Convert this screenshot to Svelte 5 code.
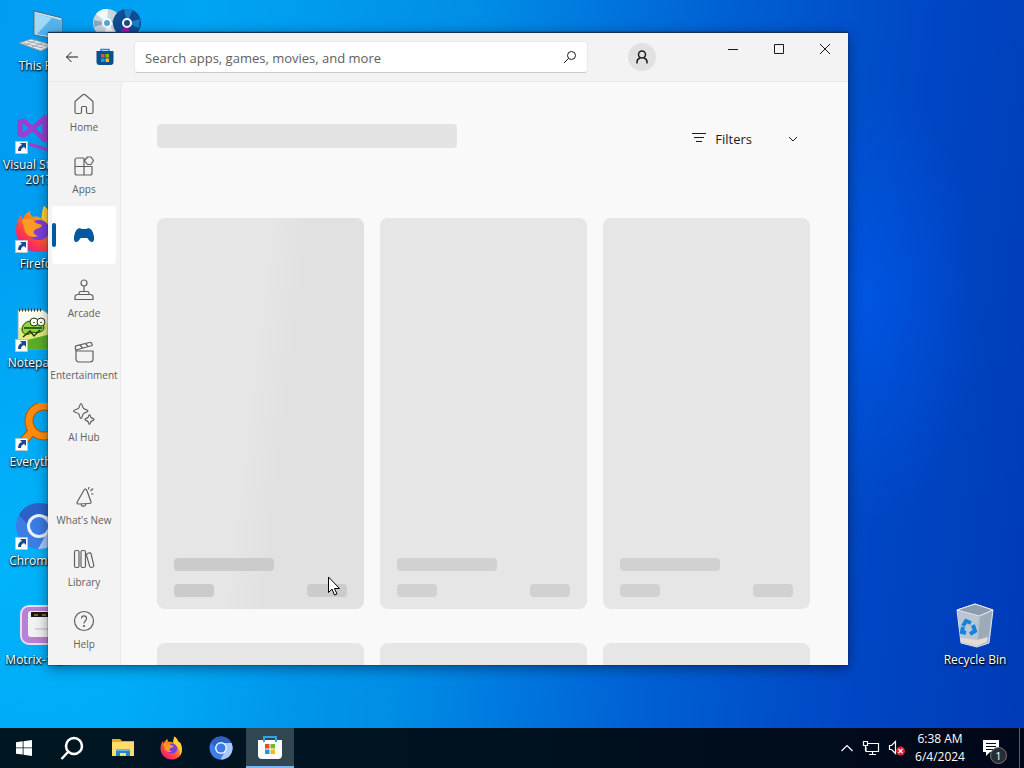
<script lang="ts">
	type Entry = { id: string; label: string };

	const shortcuts: Entry[] = [
		{ id: 'pc', label: 'This PC' },
		{ id: 'vs', label: 'Visual Studio 2017' },
		{ id: 'firefox', label: 'Firefox' },
		{ id: 'notepad', label: 'Notepad++' },
		{ id: 'everything', label: 'Everything' },
		{ id: 'chromium', label: 'Chromium' },
		{ id: 'motrix', label: 'Motrix-1.8.1' }
	];

	const topNav: Entry[] = [
		{ id: 'home', label: 'Home' },
		{ id: 'apps', label: 'Apps' },
		{ id: 'gaming', label: 'Gaming' },
		{ id: 'arcade', label: 'Arcade' },
		{ id: 'movies', label: 'Entertainment' },
		{ id: 'ai', label: 'AI Hub' }
	];

	const bottomNav: Entry[] = [
		{ id: 'news', label: "What's New" },
		{ id: 'library', label: 'Library' },
		{ id: 'help', label: 'Help' }
	];

	const placeholders = [1, 2, 3, 4, 5, 6];

	let active = $state('gaming');
	let query = $state('');
</script>

{#snippet firefoxLogo()}
	<defs>
		<linearGradient id="fox" x1="1" y1="0" x2="0.2" y2="1">
			<stop offset="0" stop-color="#ffe13b" />
			<stop offset="0.45" stop-color="#ff8a1c" />
			<stop offset="0.75" stop-color="#ff3d4a" />
			<stop offset="1" stop-color="#e3148a" />
		</linearGradient>
	</defs>
	<path
		fill="url(#fox)"
		d="M29 1c5 4 6 7 7 10 3 1 5 3 6 6 6 17-3 30-18 30C10 47 1 37 1 25c0-6 2-11 5-15l1 5c2-4 4-7 8-9 0 3 1 5 3 6 3-1 6 0 8 1 1-4 2-8 3-12z"
	/>
	<path fill="#7a3fdc" d="M17 17c6-4 15-2 17 5 2 8-4 14-11 13-6 0-10-5-9-10l7-1c2-2 1-4-4-7z" />
	<path fill="#ff9a23" d="M7 15c6-3 11-1 14 3l6 2c-1 4-6 3-8 6-1 2 1 4 4 5-7 3-13-1-14-8z" />
	<path fill="#ffd43a" d="M29 1c5 4 6 7 7 10 3 1 5 3 6 6 3 9 2 16-2 22 1-13-4-18-12-24-2-4-1-10 1-14z" />
{/snippet}

{#snippet chromiumLogo()}
	<circle cx="24" cy="24" r="23" fill="#3d7de6" />
	<path fill="#a8c8fb" d="M24 14h21a23 23 0 0 1-22 33l10-18z" />
	<path fill="#2a62c8" d="M4 13a23 23 0 0 1 41 1H24c-6 0-10 5-10 10z" />
	<circle cx="24" cy="24" r="12" fill="#e8f1ff" />
	<circle cx="24" cy="24" r="9" fill="#3a7be4" />
{/snippet}

{#snippet desktopIcon(id: string)}
	<svg class="desktop-icon" viewBox="0 0 48 48" aria-hidden="true">
		{#if id === 'pc'}
			<path fill="#d7e7f0" stroke="#47687c" d="M19 4l28 7v22l-28-5z" />
			<path fill="#55b5ec" d="M20 6l26 7v18l-26-4z" />
			<path fill="#a0d9f7" d="M20 6l17 5-15 16h-2z" />
			<path fill="#e6ecef" stroke="#8a979e" d="M4 36l12-4 22 6-12 6z" />
			<path stroke="#a3adb3" d="M8 36l20 5M12 34l20 5M10 38l12-5M17 40l12-5" />
		{:else if id === 'vs'}
			<path fill="none" stroke="#9a3fd0" stroke-width="5" stroke-linejoin="round" d="M5 16v12l4 1 21-17v22L9 15z" />
			<path fill="#9340cc" d="M32 6l12 4v28l-12 3z" />
			<path stroke="#a73cc4" stroke-width="3" d="M14 38l20 6" />
		{:else if id === 'firefox'}
			{@render firefoxLogo()}
		{:else if id === 'notepad'}
			<path fill="#fbfcf2" stroke="#9aa48b" d="M3 6h25l12 9v30H3z" />
			<path fill="#e3ec7c" d="M4 24l36-6v24H4z" />
			<path fill="#58ae28" d="M4 38l36-9v16H4z" />
			<path stroke="#333" stroke-dasharray="1 2" stroke-width="3" d="M4 6h24" />
			<path fill="#8bd93c" stroke="#1c3b0b" d="M7 26c0-7 7-11 13-8 4 2 9 1 9 6-1 5-8 5-12 4-4 4-9 3-10-2z" />
			<circle cx="19" cy="18" r="4" fill="#fff" stroke="#1c3b0b" />
			<circle cx="26" cy="18" r="4" fill="#fff" stroke="#1c3b0b" />
			<path fill="none" stroke="#1c3b0b" stroke-width="1.5" d="M8 33l7-6 4 5 6-6M9 24h18M19 18v1M26 18v1" />
		{:else if id === 'everything'}
			<path fill="none" stroke="#b85400" stroke-width="9" d="M18 27L6 41" />
			<circle cx="29" cy="18" r="15" fill="none" stroke="#b85400" stroke-width="9" />
			<path stroke="#ff8a0c" stroke-width="7" d="M19 26L6 41" />
			<circle cx="29" cy="18" r="15" fill="none" stroke="#ff8a0c" stroke-width="7" />
		{:else if id === 'chromium'}
			{@render chromiumLogo()}
		{:else if id === 'motrix'}
			<rect x="6" y="5" width="40" height="38" rx="8" fill="#b782d6" stroke="#eadcf5" stroke-width="2" />
			<rect x="13" y="10" width="30" height="26" rx="3" fill="#f2f2f4" />
			<path fill="#171717" d="M16 11h18v5H16z" />
			<path stroke="#e2b72d" d="M19 14h4M27 14h4" />
			<path stroke="#b9b9c0" d="M20 28h16" />
		{:else if id === 'disc'}
			<circle cx="14" cy="16" r="14" fill="#c6d6df" />
			<path fill="#eff8fc" d="M14 16L3 7a14 14 0 0 1 12-5zM14 16l9 11a14 14 0 0 1-12 3z" />
			<path fill="#8fa7bb" d="M14 16L1 20v-7zM14 16l13-7 1 7z" />
			<circle cx="34" cy="16" r="14" fill="#104c91" />
			<path fill="#1c7ec9" d="M34 16L31 2h9zM34 16l13-4-1 9z" />
			<path fill="#a414b1" d="M34 16l4 14q-7 2-12-3z" />
			<circle cx="14" cy="16" r="4" fill="#5ba3d2" stroke="#fff" stroke-width="2" />
			<circle cx="34" cy="16" r="4" fill="#174d91" stroke="#fff" stroke-width="2" />
		{:else if id === 'bin'}
			<path fill="#aebbc8" stroke="#dde6ef" d="M6 9l18-6 18 6-4 33-12 4-16-4z" />
			<path fill="#8d9dae" stroke="#e6edf4" d="M6 9l18-6 18 6-14 6z" />
			<path fill="#bcc6d1" d="M7 10l21 6-2 29-16-4z" />
			<path fill="#9caab9" d="M29 16l12-6-4 31-10 4z" />
			<path fill="#e5ddd4" d="M10 37l16 2 11-3-1 5-10 4-16-4z" />
			<path fill="none" stroke="#1184e0" stroke-width="4" d="M12 25l3-5 5 2M22 24l2 6-5 3M15 32l-4-1 1-5" />
		{/if}
		{#if !['pc', 'disc', 'bin', 'motrix'].includes(id)}
			<path fill="#fff" stroke="#b9c6d2" d="M.5 35.5h12v12H.5z" />
			<path fill="#174c94" d="M5 37h6v6l-2-2q-3 1-3 4H3q0-5 4-6z" />
		{/if}
	</svg>
{/snippet}

{#snippet navIcon(id: string)}
	<svg class="nav-icon" viewBox="0 0 24 24" aria-hidden="true">
		{#if id === 'home'}
			<path d="M10.8 2.8a2 2 0 0 1 2.4 0l7 6a2 2 0 0 1 .8 1.6V20a1.5 1.5 0 0 1-1.5 1.5H16a1.5 1.5 0 0 1-1.5-1.5v-4.5a1 1 0 0 0-1-1h-3a1 1 0 0 0-1 1V20A1.5 1.5 0 0 1 8 21.5H4.5A1.5 1.5 0 0 1 3 20v-9.6a2 2 0 0 1 .8-1.6z" />
		{:else if id === 'apps'}
			<path d="M12 4H5a2 2 0 0 0-2 2v13a2 2 0 0 0 2 2h13a2 2 0 0 0 2-2v-6.5H3M12 4v17" />
			<path d="M15.5 3H19l2.5 3.5-2.5 4h-3.5l-3-4z" />
		{:else if id === 'gaming'}
			<path class="solid" d="M6.5 6c1.2-.5 2 .5 3.500.5h4C15.500 6.500 16.300 5.500 17.500 6c2.500.8 4 6.500 4 10 0 2.800-2.500 3-4 1l-2-2.500h-7L6.500 17c-1.500 2-4 1.800-4-1 0-3.500 1.500-9.200 4-10z" />
		{:else if id === 'arcade'}
			<circle cx="12" cy="5" r="3" />
			<path d="M12 8v6M7 16.5V15a1.5 1.5 0 0 1 1.5-1.5h7A1.5 1.5 0 0 1 17 15v1.5M5.500 16.500h13A2.500 2.500 0 0 1 21 19v2.500H3V19a2.500 2.500 0 0 1 2.500-2.500z" />
		{:else if id === 'movies'}
			<path d="M4 11h17v8a3 3 0 0 1-3 3H7a3 3 0 0 1-3-3zM4 11l-.7-3a2 2 0 0 1 1.5-2.300L17.500 2.500a2 2 0 0 1 2.400 1.400l.4 1.600L4 10M8 5l2.500 3M13.500 3.500L16 6.500" />
		{:else if id === 'ai'}
			<path d="M9 1.500c1.300 0 1.200 3.500 2.500 4.800S16 7.800 16 9s-3.200 1.400-4.500 2.700S10.300 16.500 9 16.500 7.800 13 6.500 11.700 1.500 10.300 1.500 9 5.200 7.600 6.500 6.300 7.700 1.500 9 1.500zM17.500 12.500c.8 0 .8 2.200 1.600 3s3 1.200 3 2-2.200 1.200-3 2-.8 3-1.600 3-.8-2.200-1.600-3-3-1.200-3-2 2.200-1.200 3-2 .8-3 1.600-3z" />
		{:else if id === 'news'}
			<path d="M12.200 4.800L5.200 17c-.5 1 0 2 1 2l11.500-.5c1 0 1.500-.8 1.300-1.700L14.800 5.200c-.4-1.200-2-1.400-2.600-.4zM9 19.300c.3 2.700 4.500 2.700 5-.3M17 2l-.5 2.500M21 3.500l-2.500 2.500M21.500 9H19" />
		{:else if id === 'library'}
			<path d="M4 3.500h1.500A1.500 1.500 0 0 1 7 5v14a1.500 1.500 0 0 1-1.500 1.500H4A1.500 1.500 0 0 1 2.500 19V5A1.500 1.500 0 0 1 4 3.500zM10.500 3.500H12A1.500 1.500 0 0 1 13.500 5v14a1.500 1.500 0 0 1-1.500 1.500h-1.500A1.500 1.500 0 0 1 9 19V5a1.500 1.500 0 0 1 1.500-1.500zM15.500 6.500l2-.7q1.200-.2 1.600 1l2.700 11.500q.2 1.300-1 1.700l-1.500.4q-1.200.2-1.600-1L14.500 8.200q-.2-1.300 1-1.700z" />
		{:else if id === 'help'}
			<circle cx="12" cy="12" r="9.500" />
			<path d="M9.500 9.500c0-3.500 5-3.500 5 0 0 2.500-2.500 2.500-2.500 5" />
			<circle class="solid" cx="12" cy="17" r=".5" />
		{/if}
	</svg>
{/snippet}

{#snippet navItem(item: Entry)}
	<button
		class="nav-item"
		class:active={active === item.id}
		aria-label={item.label}
		onclick={() => (active = item.id)}
	>
		{@render navIcon(item.id)}
		{#if active !== item.id}<span>{item.label}</span>{/if}
	</button>
{/snippet}

<div class="screen">
	<div class="desktop">
		<div class="shortcuts">
			{#each shortcuts as item (item.id)}
				<a class="shortcut" href="#{item.id}">
					{@render desktopIcon(item.id)}
					<span>{item.label}</span>
				</a>
			{/each}
			<a class="shortcut" href="#disc" aria-label="Disc tool">{@render desktopIcon('disc')}</a>
		</div>
		<a class="shortcut recycle" href="#bin">
			{@render desktopIcon('bin')}
			<span>Recycle Bin</span>
		</a>

		<section class="window" aria-label="Microsoft Store">
			<header class="titlebar">
				<button class="back" aria-label="Back">
					<svg width="14" height="14" viewBox="0 0 14 14"><path d="M13 7H1.5M6.500 2l-5 5 5 5" /></svg>
				</button>
				<svg class="store-logo" viewBox="0 0 18 18" aria-hidden="true">
					<path fill="none" stroke="#1190df" stroke-width="1.5" d="M5 4V1.500h8V4" />
					<path fill="#0b4e91" d="M.5 3h17v11a3 3 0 0 1-3 3h-11a3 3 0 0 1-3-3z" />
					<path fill="#f25022" d="M5 6h3.500v3.500H5z" />
					<path fill="#7fba00" d="M9.500 6H13v3.500H9.500z" />
					<path fill="#00a4ef" d="M5 10.500h3.500V14H5z" />
					<path fill="#ffb900" d="M9.500 10.500H13V14H9.500z" />
				</svg>
				<form class="search" onsubmit={(e) => e.preventDefault()}>
					<input
						type="text"
						aria-label="Search"
						placeholder="Search apps, games, movies, and more"
						bind:value={query}
					/>
					<button aria-label="Submit search">
						<svg width="14" height="14" viewBox="0 0 14 14"><circle cx="8.5" cy="5.5" r="4" /><path d="M5.500 8.500L1 13" /></svg>
					</button>
				</form>
				<button class="account" aria-label="Account">
					<svg width="16" height="16" viewBox="0 0 16 16"><circle cx="8" cy="5.5" r="3.5" /><path d="M3 14.500V13c0-2 1.500-3.500 3-4M13 14.500V13c0-2-1.500-3.500-3-4" /></svg>
				</button>
				<div class="controls">
					<button aria-label="Minimize"><svg width="12" height="12" viewBox="0 0 12 12"><path d="M1 6.500h10" /></svg></button>
					<button aria-label="Maximize"><svg width="12" height="12" viewBox="0 0 12 12"><path d="M1.500 1.500h9v9h-9z" /></svg></button>
					<button aria-label="Close"><svg width="12" height="12" viewBox="0 0 12 12"><path d="M1 1l10 10M11 1L1 11" /></svg></button>
				</div>
			</header>

			<div class="body">
				<nav>
					{#each topNav as item (item.id)}
						{@render navItem(item)}
					{/each}
					<div class="spacer"></div>
					{#each bottomNav as item (item.id)}
						{@render navItem(item)}
					{/each}
				</nav>

				<main>
					<div class="heading">
						<div class="title-bone"></div>
						<button class="filters">
							<svg width="14" height="12" viewBox="0 0 14 12"><path d="M0 .5h14M2 4.500h10M4 8.500h6" /></svg>
							<span>Filters</span>
							<svg class="chevron" width="10" height="6" viewBox="0 0 10 6"><path d="M1 1l4 4 4-4" /></svg>
						</button>
					</div>
					<div class="grid">
						{#each placeholders as card (card)}
							<div class="card">
								<div class="bone long"></div>
								<div class="row">
									<div class="bone"></div>
									<div class="bone"></div>
								</div>
							</div>
						{/each}
					</div>
				</main>
			</div>
		</section>
	</div>

	<footer class="taskbar">
		<button class="task" aria-label="Start">
			<svg width="16" height="16" viewBox="0 0 16 16"><path fill="#fff" d="M0 2.200L6.700 1.300v6.200H0zM7.500 1.200L16 0v7.500H7.500zM0 8.300h6.700v6.300L0 13.700zM7.500 8.300H16V16l-8.500-1.200z" /></svg>
		</button>
		<button class="task" aria-label="Search">
			<svg class="lens" width="24" height="24" viewBox="0 0 24 24"><circle cx="14" cy="10" r="8" /><path d="M8 16l-6.500 7" /></svg>
		</button>
		<div class="pinned">
			<button class="task" aria-label="File Explorer">
				<svg width="24" height="24" viewBox="0 0 24 24">
					<path fill="#eba923" d="M1 3h8l2 2h12v6H1z" />
					<path fill="#ffdc6b" d="M1 6h22v14H1z" />
					<path fill="#2786c8" d="M5 13h14v7h-4v-3H9v3H5z" />
					<path fill="#68b7ed" d="M5 13h14v2H5z" />
				</svg>
			</button>
			<button class="task" aria-label="Firefox"><svg width="24" height="24" viewBox="0 0 48 48">{@render firefoxLogo()}</svg></button>
			<button class="task" aria-label="Chromium"><svg width="24" height="24" viewBox="0 0 48 48">{@render chromiumLogo()}</svg></button>
			<button class="task open" aria-label="Microsoft Store">
				<svg width="24" height="24" viewBox="0 0 24 24">
					<path fill="#fff" d="M0 5h24v15q0 4-4 4H4q-4 0-4-4z" />
					<path fill="none" stroke="#2ba4e8" stroke-width="2" d="M6 7V2h12v5" />
					<path fill="#e74c25" d="M7 9h4.500v4.500H7z" />
					<path fill="#76b729" d="M12.500 9H17v4.500h-4.500z" />
					<path fill="#189bdc" d="M7 14.500h4.500V19H7z" />
					<path fill="#f8b817" d="M12.500 14.500H17V19h-4.500z" />
				</svg>
			</button>
		</div>
		<div class="tray">
			<button aria-label="Show hidden icons"><svg width="14" height="16" viewBox="0 0 14 16"><path d="M1.500 11L7 5.500l5.500 5.500" /></svg></button>
			<button aria-label="Network"><svg width="18" height="16" viewBox="0 0 18 16"><path d="M5 3.500h11.500v8H4V7M10.500 12v2.500M7 14.500h7M1.500 1.500h4v4h-4zM3.500 6v5" /></svg></button>
			<button aria-label="Volume muted">
				<svg width="18" height="16" viewBox="0 0 18 16">
					<path d="M1.500 5.500h2l4-4v12l-4-4h-2z" />
					<circle cx="12.5" cy="11" r="4.5" fill="#e0242c" stroke="none" />
					<path d="M10.500 9l4 4M14.500 9l-4 4" />
				</svg>
			</button>
		</div>
		<button class="clock"><span>6:38 AM</span><span>6/4/2024</span></button>
		<button class="notifications" aria-label="1 notification">
			<svg width="18" height="18" viewBox="0 0 18 18"><path fill="#fff" d="M1 1h16v12H8l-4 4v-4H1z" /><path stroke="#000a19" d="M4 4.500h10M4 7.500h10M4 10.500h7" /></svg>
			<span class="badge">1</span>
		</button>
		<button class="show-desktop" aria-label="Show desktop"></button>
	</footer>

	<svg class="cursor" width="14" height="20" viewBox="0 0 14 20" aria-hidden="true">
		<path fill="#fff" stroke="#000" d="M.5 1v15.500L4 13l2.500 6 2.500-1-2.500-5.500h5z" />
	</svg>
</div>

<style>
	:global(body) {
		margin: 0;
	}

	.screen,
	.screen * {
		box-sizing: border-box;
	}

	.screen {
		position: relative;
		display: flex;
		flex-direction: column;
		height: 100vh;
		overflow: hidden;
		font-family: 'Open Sans', 'Noto Sans', sans-serif;
		font-size: 12px;
		color: #1b1b1b;
		background:
			radial-gradient(ellipse 110px 220px at 85% 39%, rgba(0, 88, 234, 0.7) 0%, rgba(0, 80, 220, 0) 100%),
			radial-gradient(ellipse 300px 360px at 0% 75%, rgba(0, 184, 252, 0.8) 0%, rgba(0, 184, 252, 0) 100%),
			linear-gradient(97deg, #009cf2 0%, #00a4f4 18%, #008de6 43%, #0060d4 65%, #0046c4 84%, #003ab6 100%);
	}

	button {
		display: flex;
		align-items: center;
		justify-content: center;
		padding: 0;
		border: 0;
		background: none;
		font: inherit;
		color: inherit;
	}

	.desktop {
		position: relative;
		flex: 1;
		min-height: 0;
	}

	.shortcuts {
		display: grid;
		grid-auto-flow: column;
		grid-template-rows: repeat(7, 99px);
		grid-auto-columns: 78px;
		width: max-content;
	}

	.shortcut {
		display: flex;
		flex-direction: column;
		align-items: center;
		gap: 3px;
		padding-top: 7px;
		color: #fff;
		line-height: 15px;
		text-align: center;
		text-decoration: none;
		text-shadow: 1px 1px 2px #000, 0 1px 2px #000;
	}

	.desktop-icon {
		width: 48px;
		height: 48px;
		fill: none;
	}

	.recycle {
		position: absolute;
		right: 10px;
		bottom: 36px;
		width: 78px;
		height: 98px;
	}

	.window {
		position: absolute;
		inset: 32px 176px 63px 48px;
		display: flex;
		flex-direction: column;
		border-top: 1px solid #173553;
		background: #f3f3f3;
		box-shadow: 0 0 1px #001c40, 0 3px 12px rgba(0, 0, 0, 0.45);
	}

	.titlebar {
		display: flex;
		align-items: center;
		height: 49px;
		border-bottom: 1px solid #e9e9e9;
	}

	.titlebar svg {
		fill: none;
		stroke: #1b1b1b;
	}

	.back {
		width: 48px;
		height: 40px;
	}

	.titlebar .store-logo {
		width: 18px;
		height: 18px;
		stroke: none;
	}

	.search {
		display: flex;
		flex: 1;
		height: 32px;
		margin-left: 20px;
		border: 1px solid #e8e8e8;
		border-bottom-color: #c9c9c9;
		border-radius: 4px;
		background: #fff;
	}

	.search input {
		flex: 1;
		min-width: 0;
		padding: 2px 0 0 10px;
		border: 0;
		outline: 0;
		background: none;
		font: inherit;
		font-size: 13px;
		color: #1b1b1b;
	}

	.search input::placeholder {
		color: #606060;
		opacity: 1;
	}

	.search button {
		width: 34px;
	}

	.account {
		width: 28px;
		height: 28px;
		margin: 0 54px 0 40px;
		border-radius: 50%;
		background: #e1e1e1;
	}

	.titlebar .account svg {
		stroke-width: 1.5px;
	}

	.controls {
		display: flex;
		align-self: flex-start;
	}

	.controls button {
		width: 46px;
		height: 32px;
	}

	.body {
		display: flex;
		flex: 1;
		min-height: 0;
	}

	nav {
		display: flex;
		flex-direction: column;
		gap: 4px;
		width: 72px;
		padding: 0 4px 8px;
	}

	.spacer {
		flex: 1;
	}

	.nav-item {
		position: relative;
		flex-direction: column;
		justify-content: flex-start;
		gap: 4px;
		height: 58px;
		padding-top: 10px;
		border-radius: 4px;
		font-size: 10px;
		line-height: 14px;
		color: #606060;
	}

	.nav-item.active {
		justify-content: center;
		padding: 0;
		background: #fff;
		color: #0058a0;
	}

	.nav-item.active::before {
		content: '';
		position: absolute;
		left: 0;
		width: 4px;
		height: 24px;
		border-radius: 2px;
		background: #0058a0;
	}

	.nav-icon {
		width: 24px;
		height: 24px;
		fill: none;
		stroke: currentColor;
		stroke-width: 1.2px;
		stroke-linejoin: round;
	}

	.nav-icon .solid {
		fill: currentColor;
	}

	main {
		flex: 1;
		min-width: 0;
		padding: 42px 38px 0 36px;
		overflow: hidden;
		border-left: 1px solid #e9e9e9;
		border-top-left-radius: 6px;
		background: #f9f9f9;
	}

	.heading {
		display: flex;
		align-items: flex-start;
		justify-content: space-between;
		height: 24px;
		margin-bottom: 70px;
	}

	.title-bone {
		width: 300px;
		height: 24px;
		border-radius: 4px;
		background: #e3e3e3;
	}

	.filters {
		gap: 9px;
		height: 30px;
		padding-right: 12px;
		font-size: 13px;
	}

	.filters svg {
		fill: none;
		stroke: #1b1b1b;
	}

	.filters .chevron {
		margin-left: 27px;
	}

	.grid {
		display: grid;
		grid-template-columns: repeat(3, 1fr);
		gap: 34px 16px;
	}

	.card {
		display: flex;
		flex-direction: column;
		justify-content: flex-end;
		gap: 13px;
		height: 391px;
		padding: 12px 17px;
		border-radius: 8px;
		background: #e6e6e6;
	}

	.card:first-child {
		background: linear-gradient(97deg, #e6e6e6 45%, #e1e1e1 60%);
	}

	.row {
		display: flex;
		justify-content: space-between;
	}

	.bone {
		width: 40px;
		height: 13px;
		border-radius: 4px;
		background: #d1d1d1;
	}

	.bone.long {
		width: 100px;
	}

	.card:first-child .bone {
		background: #cbcbcb;
	}

	.taskbar {
		display: flex;
		height: 40px;
		color: #fff;
		background: linear-gradient(90deg, #001722, #00111f 50%, #000719);
	}

	.task {
		width: 48px;
		height: 40px;
	}

	.task.open {
		border-bottom: 2px solid #76b9ed;
		background: #304751;
	}

	.pinned {
		display: flex;
		gap: 1px;
		margin-left: 3px;
	}

	.lens {
		fill: none;
		stroke: #fff;
		stroke-width: 2.5px;
	}

	.tray {
		display: flex;
		gap: 8px;
		margin-left: auto;
	}

	.tray svg {
		fill: none;
		stroke: #fff;
		stroke-width: 1.2px;
	}

	.clock {
		flex-direction: column;
		width: 68px;
		line-height: 18px;
	}

	.notifications {
		position: relative;
		justify-content: flex-start;
		width: 45px;
		padding-left: 8px;
	}

	.badge {
		position: absolute;
		right: 12px;
		bottom: 4px;
		width: 17px;
		height: 17px;
		border: 1px solid #777;
		border-radius: 50%;
		background: #282d36;
		font-size: 11px;
		line-height: 15px;
	}

	.show-desktop {
		width: 5px;
		border-left: 1px solid #5a606c;
	}

	.cursor {
		position: absolute;
		left: 328px;
		top: 576px;
	}
</style>
